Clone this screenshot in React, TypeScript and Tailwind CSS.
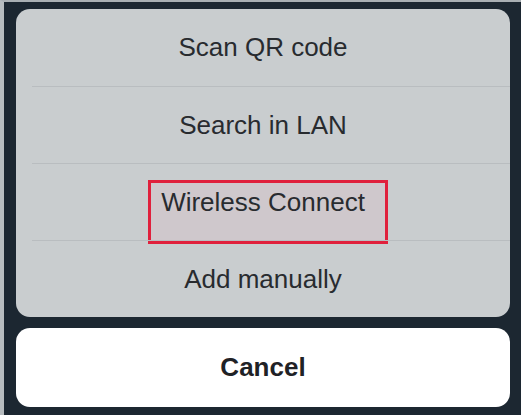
import React from "react";

const options = ["Scan QR code", "Search in LAN", "Wireless Connect", "Add manually"];

export default function App() {
  return (
    <div
      className="flex h-[415px] w-[521px] flex-col gap-[11px] border-l-4 border-t-2 border-l-[#b7bcbf] border-t-[#a9afb3] bg-[#1c2731] pb-[8px] pl-[12px] pr-[11px] pt-[7px]"
      style={{ fontFamily: '"Liberation Sans", Arial, sans-serif' }}
    >
      <div className="flex h-[308px] flex-col overflow-hidden rounded-[14px] bg-[#c9cdcf]">
        {options.map((label, i) => (
          <div key={label} className="relative flex flex-1 flex-col">
            {label === "Wireless Connect" && (
              <div className="absolute left-[132px] top-[17px] h-[64px] w-[240px] border-[3px] border-[#e0203c] bg-[#cfc8cc]" />
            )}
            {i > 0 && <div className="relative ml-[16px] h-px bg-[#b9bdc0]" />}
            <div className="relative flex flex-1 items-center justify-center text-[26px] text-[#282b2f]">
              {label}
            </div>
          </div>
        ))}
      </div>
      <div className="flex h-[79px] items-center justify-center rounded-[14px] bg-white text-[26px] font-bold text-[#1f2226]">
        Cancel
      </div>
    </div>
  );
}
